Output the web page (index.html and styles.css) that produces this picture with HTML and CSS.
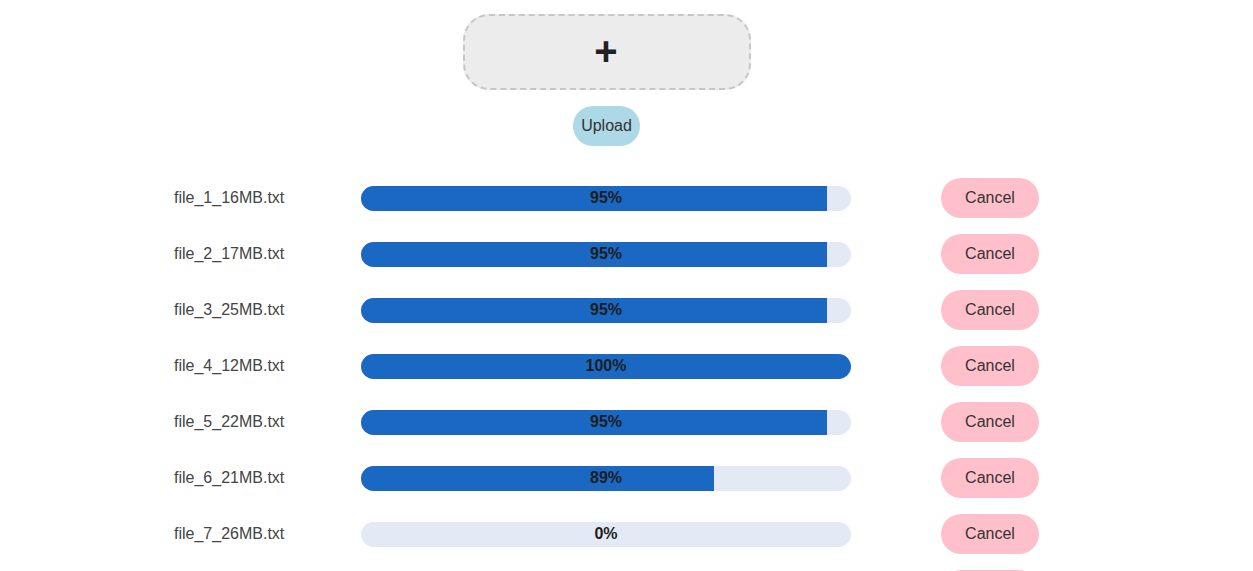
FILE: index.html
```html
<!DOCTYPE html>
<html lang="en">
<head>
<meta charset="utf-8">
<title>File Upload</title>
<link rel="stylesheet" href="styles.css">
</head>
<body>
<div class="page">
  <div class="dropzone"><span class="plus">+</span></div>
  <button class="upload-btn">Upload</button>
  <div class="file-list">
    <div class="file-row">
      <span class="file-name">file_1_16MB.txt</span>
      <div class="track"><div class="fill" style="width:95%"></div><span class="pct">95%</span></div>
      <button class="cancel-btn">Cancel</button>
    </div>
    <div class="file-row">
      <span class="file-name">file_2_17MB.txt</span>
      <div class="track"><div class="fill" style="width:95%"></div><span class="pct">95%</span></div>
      <button class="cancel-btn">Cancel</button>
    </div>
    <div class="file-row">
      <span class="file-name">file_3_25MB.txt</span>
      <div class="track"><div class="fill" style="width:95%"></div><span class="pct">95%</span></div>
      <button class="cancel-btn">Cancel</button>
    </div>
    <div class="file-row">
      <span class="file-name">file_4_12MB.txt</span>
      <div class="track"><div class="fill" style="width:100%"></div><span class="pct">100%</span></div>
      <button class="cancel-btn">Cancel</button>
    </div>
    <div class="file-row">
      <span class="file-name">file_5_22MB.txt</span>
      <div class="track"><div class="fill" style="width:95%"></div><span class="pct">95%</span></div>
      <button class="cancel-btn">Cancel</button>
    </div>
    <div class="file-row">
      <span class="file-name">file_6_21MB.txt</span>
      <div class="track"><div class="fill" style="width:72%"></div><span class="pct">89%</span></div>
      <button class="cancel-btn">Cancel</button>
    </div>
    <div class="file-row">
      <span class="file-name">file_7_26MB.txt</span>
      <div class="track"><div class="fill" style="width:0%"></div><span class="pct">0%</span></div>
      <button class="cancel-btn">Cancel</button>
    </div>
    <div class="file-row">
      <span class="file-name">file_8_19MB.txt</span>
      <div class="track"><div class="fill" style="width:0%"></div><span class="pct">0%</span></div>
      <button class="cancel-btn">Cancel</button>
    </div>
  </div>
</div>
</body>
</html>
```

FILE: styles.css
```css
html, body {
  margin: 0;
  padding: 0;
  background: #ffffff;
  font-family: "Liberation Sans", Arial, sans-serif;
}

.page {
  width: 1213px;
  padding-top: 14px;
  display: flex;
  flex-direction: column;
  align-items: center;
}

.dropzone {
  box-sizing: border-box;
  width: 288px;
  height: 76px;
  border: 2px dashed #c6c6c6;
  border-radius: 26px;
  background: #ececec;
  display: flex;
  align-items: center;
  justify-content: center;
}

.plus {
  font-size: 40px;
  font-weight: bold;
  line-height: 1;
  color: #222222;
  margin-top: -3px;
  margin-left: -1px;
}

.upload-btn {
  margin-top: 16px;
  height: 40px;
  padding: 0 8px;
  border: none;
  border-radius: 20px;
  background: #add8e6;
  color: #333333;
  font-family: inherit;
  font-size: 16px;
}

.file-list {
  margin-top: 32px;
  display: flex;
  flex-direction: column;
  gap: 16px;
}

.file-row {
  display: flex;
  align-items: center;
  height: 40px;
}

.file-name {
  width: 187px;
  font-size: 16px;
  color: #444444;
}

.track {
  width: 490px;
  height: 25px;
  border-radius: 12.5px;
  background: #e3eaf5;
  overflow: hidden;
  display: grid;
  margin-top: 1px;
}

.fill {
  grid-area: 1 / 1;
  height: 100%;
  background: #1a68c2;
}

.pct {
  grid-area: 1 / 1;
  align-self: center;
  justify-self: center;
  font-size: 16px;
  font-weight: bold;
  color: #1d1d1d;
  margin-top: -2px;
}

.cancel-btn {
  margin-left: 90px;
  width: 98px;
  height: 40px;
  border: none;
  border-radius: 20px;
  background: #ffc0cb;
  color: #333333;
  font-family: inherit;
  font-size: 16px;
}
```
